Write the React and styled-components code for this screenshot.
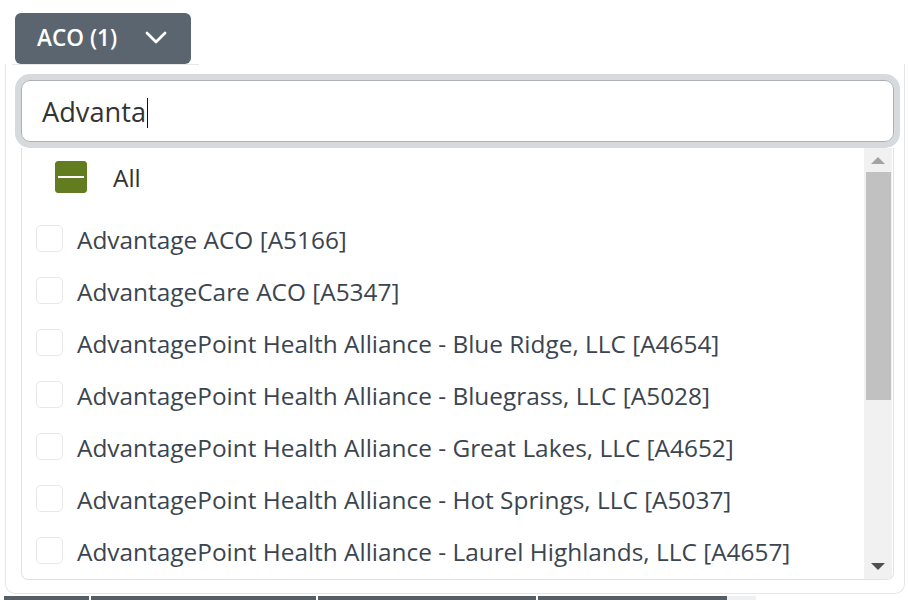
import React from "react";
import styled, { createGlobalStyle } from "styled-components";

const Global = createGlobalStyle`
  html, body { margin: 0; padding: 0; background: #fff; }
  body { font-family: "Open Sans", "Noto Sans", sans-serif; width: 908px; height: 600px; overflow: hidden; }
`;

const Page = styled.div`
  position: relative;
  width: 908px;
  height: 600px;
  overflow: hidden;
`;

const TopBar = styled.div`
  display: flex;
  padding: 13px 0 0 15px;
  height: 51px;
  box-sizing: border-box;
`;

const FilterButton = styled.button`
  display: flex;
  align-items: center;
  gap: 28px;
  height: 51px;
  width: 176px;
  box-sizing: border-box;
  padding: 0 0 2px 22px;
  border: none;
  border-radius: 6px;
  background: #5a6570;
  color: #fff;
  font-family: "Open Sans", sans-serif;
  font-weight: 600;
  font-size: 22.6px;
  white-space: nowrap;
  cursor: pointer;
`;

const Panel = styled.div`
  position: absolute;
  left: 5px;
  top: 64px;
  width: 900px;
  height: 530px;
  box-sizing: border-box;
  background: #fff;
  border: 1px solid #e4e6e8;
  border-top: none;
  border-radius: 0 0 10px 10px;
  padding: 16px 10px 13px 15px;
  display: flex;
  flex-direction: column;
  z-index: 2;
  &::before {
    content: "";
    position: absolute;
    top: 0;
    left: 6px;
    width: 187px;
    height: 1px;
    background: #e6e8ea;
  }
`;

const SearchInput = styled.div`
  height: 62px;
  box-sizing: border-box;
  border: 1px solid #acb1b8;
  border-radius: 9px;
  box-shadow: 0 0 0 6px #d6dadd;
  display: flex;
  align-items: center;
  padding-left: 20px;
  font-size: 27.2px;
  color: #333;
  margin-bottom: 6px;
`;

const Caret = styled.span`
  display: inline-block;
  width: 1px;
  height: 30px;
  background: #111;
  margin-left: 1px;
  transform: translateY(2px);
`;

const ListBox = styled.div`
  flex: 1;
  display: flex;
  border: 1px solid #dfe2e6;
  border-top: none;
  border-radius: 0 0 7px 7px;
  overflow: hidden;
`;

const Items = styled.div`
  flex: 1;
  display: flex;
  flex-direction: column;
`;

const Row = styled.div`
  display: flex;
  align-items: center;
  flex-shrink: 0;
  height: ${(p) => (p.$all ? "58px" : "52px")};
  margin-bottom: ${(p) => (p.$all ? "7px" : "0")};
  padding-left: ${(p) => (p.$all ? "33px" : "14px")};
  gap: ${(p) => (p.$all ? "26px" : "14px")};
  font-size: 24.4px;
  color: ${(p) => (p.$all ? "#333" : "#3a4550")};
  white-space: nowrap;
`;

const Box = styled.span`
  width: ${(p) => (p.$all ? "32px" : "27px")};
  height: ${(p) => (p.$all ? "32px" : "27px")};
  box-sizing: border-box;
  border-radius: ${(p) => (p.$all ? "3px" : "5px")};
  border: 1px solid ${(p) => (p.$all ? "#617d1f" : "#e6e8ea")};
  background: ${(p) => (p.$all ? "#617d1f" : "#fff")};
  display: flex;
  align-items: center;
  justify-content: center;
  flex-shrink: 0;
  transform: translateY(${(p) => (p.$all ? "0" : "-1px")});
  &::after {
    content: "";
    display: ${(p) => (p.$all ? "block" : "none")};
    width: 26px;
    height: 2px;
    background: #fff;
  }
`;

const Scrollbar = styled.div`
  width: 28px;
  background: #f1f1f1;
  display: flex;
  flex-direction: column;
  align-items: center;
  margin-right: 1px;
`;

const Arrow = styled.div`
  height: 24px;
  width: 100%;
  display: flex;
  align-items: center;
  justify-content: center;
  flex-shrink: 0;
`;

const Thumb = styled.div`
  width: 25px;
  height: 228px;
  background: #c1c1c1;
`;

const Spacer = styled.div`
  flex: 1;
`;

const TableHeader = styled.div`
  position: absolute;
  left: 4px;
  right: 0;
  top: 596px;
  height: 4px;
  display: flex;
`;

const HeadCell = styled.div`
  width: ${(p) => p.$w}px;
  background: ${(p) => p.$bg};
  border-right: ${(p) => (p.$sep ? "2px solid #fff" : "none")};
`;

const items = [
  "Advantage ACO [A5166]",
  "AdvantageCare ACO [A5347]",
  "AdvantagePoint Health Alliance - Blue Ridge, LLC [A4654]",
  "AdvantagePoint Health Alliance - Bluegrass, LLC [A5028]",
  "AdvantagePoint Health Alliance - Great Lakes, LLC [A4652]",
  "AdvantagePoint Health Alliance - Hot Springs, LLC [A5037]",
  "AdvantagePoint Health Alliance - Laurel Highlands, LLC [A4657]",
];

export default function App() {
  return (
    <Page>
      <Global />
      <TopBar>
        <FilterButton>
          ACO (1)
          <svg width="22" height="14" viewBox="0 0 22 14">
            <path d="M2 2 L11 11 L20 2" stroke="#fff" strokeWidth="2.8" fill="none" strokeLinecap="round" strokeLinejoin="round" />
          </svg>
        </FilterButton>
      </TopBar>
      <Panel>
        <SearchInput>
          Advanta<Caret />
        </SearchInput>
        <ListBox>
          <Items>
            <Row $all>
              <Box $all />
              All
            </Row>
            {items.map((t) => (
              <Row key={t}>
                <Box />
                {t}
              </Row>
            ))}
          </Items>
          <Scrollbar>
            <Arrow>
              <svg width="14" height="8" viewBox="0 0 14 8">
                <path d="M0 8 L7 1 L14 8 Z" fill="#a3a3a3" />
              </svg>
            </Arrow>
            <Thumb />
            <Spacer />
            <Arrow>
              <svg width="14" height="8" viewBox="0 0 14 8">
                <path d="M0 0 L14 0 L7 7 Z" fill="#505050" />
              </svg>
            </Arrow>
          </Scrollbar>
        </ListBox>
      </Panel>
      <TableHeader>
        <HeadCell $w={85} $bg="#555f68" $sep />
        <HeadCell $w={225} $bg="#555f68" $sep />
        <HeadCell $w={218} $bg="#555f68" $sep />
        <HeadCell $w={189} $bg="#555f68" />
        <HeadCell $w={29} $bg="#eef0f2" />
      </TableHeader>
    </Page>
  );
}
